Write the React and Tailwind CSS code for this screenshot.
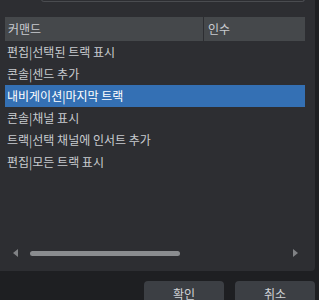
const rows = [
  "편집|선택된 트랙 표시",
  "콘솔|센드 추가",
  "내비게이션|마지막 트랙",
  "콘솔|채널 표시",
  "트랙|선택 채널에 인서트 추가",
  "편집|모든 트랙 표시",
];

const App = () => {
  return (
    <div
      className="w-[319px] h-[300px] overflow-hidden bg-[#1e1f22] text-[12px] text-[#c8cbcf]"
      style={{ fontFamily: '"Noto Sans CJK KR", "Noto Sans", sans-serif' }}
    >
      <div className="w-[315px] h-[271px] bg-[#2d2e32] rounded-br-[4px] flex flex-col">
        {/* search field edge */}
        <div className="h-[3px] ml-[41px] mr-[10px] border border-t-0 border-[#4a4c50] rounded-b-[4px] -mt-px" />

        {/* table */}
        <div className="mt-[15px] ml-[5px] w-[300px] flex flex-col">
          <div className="h-[24px] bg-[#45484b] flex">
            <div className="w-[199px] border-r border-[#2d2e32] pl-[3px] flex items-center">
              커맨드
            </div>
            <div className="flex-1 pl-[4px] flex items-center">인수</div>
          </div>

          {rows.map((row, i) => (
            <div
              key={row}
              className={
                i === 2
                  ? "h-[22px] pl-[2px] flex items-center bg-[#3470b4] text-white whitespace-nowrap"
                  : "h-[22px] pl-[2px] flex items-center whitespace-nowrap"
              }
            >
              {row}
            </div>
          ))}
        </div>

        {/* horizontal scrollbar */}
        <div className="mt-auto mb-[15px] h-[6px] flex items-center">
          <div className="w-[30px] flex justify-end pr-[12px]">
            <div className="w-0 h-0 border-y-[4px] border-y-transparent border-r-[5px] border-r-[#808285]" />
          </div>
          <div className="w-[150px] h-[5px] rounded-full bg-[#8a8c8f]" />
          <div className="flex-1" />
          <div className="w-0 h-0 border-y-[4px] border-y-transparent border-l-[5px] border-l-[#808285] mr-[17px]" />
        </div>
      </div>

      {/* buttons */}
      <div className="flex justify-end gap-[11px] pt-[10px] pr-[4px]">
        <button className="w-[80px] h-[30px] rounded-[4px] bg-[#3c3f44] text-[#d0d3d6] flex justify-center pt-[4px]">
          확인
        </button>
        <button className="w-[80px] h-[30px] rounded-[4px] bg-[#3c3f44] text-[#d0d3d6] flex justify-center pt-[4px]">
          취소
        </button>
      </div>
    </div>
  );
};

export default App;
